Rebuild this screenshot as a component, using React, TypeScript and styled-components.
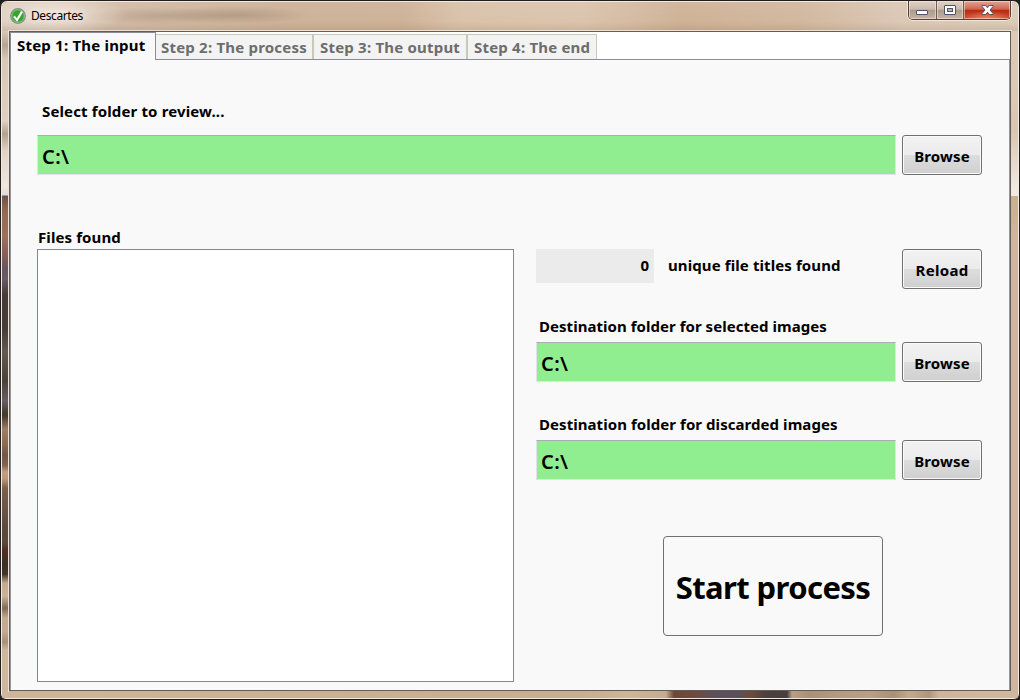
import React from 'react';
import styled, { createGlobalStyle, css } from 'styled-components';

const Global = createGlobalStyle`
  * { box-sizing: border-box; }
  html, body { margin: 0; padding: 0; background: #20201f; overflow: hidden; }
  button, input { font: inherit; color: inherit; margin: 0; }
`;

const Window = styled.div`
  width: 1020px;
  height: 700px;
  display: flex;
  flex-direction: column;
  border: 1px solid #201c1c;
  border-radius: 7px 7px 6px 6px;
  overflow: hidden;
  font-family: 'Noto Sans', 'Open Sans', sans-serif;
  color: #000;
  background: #cfb79f;
  box-shadow: inset 0 0 0 1px #f5eae0;
`;

const TitleBar = styled.header`
  height: 29px;
  flex: none;
  margin: 1px 1px 0;
  border-radius: 6px 6px 0 0;
  display: flex;
  align-items: flex-start;
  background:
    radial-gradient(ellipse 70px 22px at 55px 12px, rgba(255, 250, 245, 0.6), transparent),
    radial-gradient(ellipse 75px 9px at 155px 14px, rgba(145, 120, 100, 0.32), transparent),
    radial-gradient(ellipse 75px 9px at 232px 13px, rgba(135, 108, 88, 0.36), transparent),
    linear-gradient(180deg, rgba(255, 255, 255, 0.06), transparent 70%, rgba(90, 60, 35, 0.12)),
    linear-gradient(90deg, #dccdbf 0, #d3bda9 90px, #ccb298 280px, #cdb297 400px, #dac2aa 460px, #dbc4ad 580px, #ceb296 680px, #d2b89e 800px, #dbc8b6 900px, #dccbb9 100%);
`;

const AppIcon = styled.svg`
  width: 16px;
  height: 16px;
  margin: 6px 0 0 8px;
`;

const Title = styled.h1`
  margin: 6px 0 0 5px;
  font-size: 12px;
  line-height: 16px;
  font-weight: 400;
  letter-spacing: -0.4px;
  text-shadow: 0 0 8px #fff;
`;

const Controls = styled.div`
  display: flex;
  margin: -1px 7px 0 auto;
  width: 103px;
  height: 19px;
  border: 1px solid #54413b;
  border-top: 0;
  border-radius: 0 0 5px 5px;
  overflow: hidden;
  box-shadow: 0 0 0 1px rgba(255, 245, 235, 0.65);
`;

const Control = styled.button<{ $w: number; $divided?: boolean; $close?: boolean }>`
  width: ${(p) => p.$w}px;
  flex: none;
  height: 100%;
  padding: 0;
  border: 0;
  display: flex;
  justify-content: center;
  align-items: flex-start;
  border-left: ${(p) => (p.$divided ? 1 : 0)}px solid #6d5c55;
  background: ${(p) =>
    p.$close
      ? 'radial-gradient(ellipse 26px 8px at 50% 100%, #ec8568, transparent), linear-gradient(#e3a494, #cf6551 46%, #b82c13 50%, #cb4a2d)'
      : 'linear-gradient(#ded2c8, #cbbaac 46%, #ac9a8c 50%, #c5b3a3)'};
  box-shadow: inset 0 0 0 1px rgba(255, 240, 230, 0.5);
`;

const Body = styled.div`
  flex: 1;
  min-height: 0;
  display: flex;
  padding: 0 1px 1px;
`;

const Side = styled.div<{ $right?: boolean }>`
  width: 7px;
  flex: none;
  background: ${(p) =>
    p.$right
      ? 'linear-gradient(#dccab8 0, #dccab8 50px, #d9c5b1 100px, #efe8e1 155px, #f1ebe5 165px, #c9b092 165px, #cfb79f 215px, #cfb79f)'
      : `linear-gradient(#d9c8b9 0, #b5a595 14px, #d8c8b8 28px, #ded0c2 90px, #b2a18e 103px, #e2d3c6 120px,
        #eee6df 155px, #dfdcda 164px, #6b5151 165px, #916951 178px, #9d715b 205px, #865e5b 225px, #665663 237px,
        #6a5b67 248px, #46393a 264px, #443c39 298px, #615b54 321px, #48423b 350px, #685d69 370px, #443c30 382px,
        #493b30 385px, #9d7e63 398px, #8d6b52 413px, #705947 424px, #806350 434px, #c29d80 441px, #bd9776 448px,
        #7c604d 457px, #59493e 500px, #59493e 512px, #512e22 519px, #3b3027 532px, #3f332a 543px, #c5aa8b 552px,
        #ceb497 565px, #816c59 577px, #c4ab91 587px, #c4ab91 600px, #a99079 611px, #cfb79b 619px, #cfb79f)`};
`;

const Center = styled.div`
  flex: 1;
  min-width: 0;
  display: flex;
  flex-direction: column;
`;

const BottomGlass = styled.div`
  flex: 1;
  background: linear-gradient(90deg, #cdb59a 0, #c7ae93 570px, #cdb599 620px, #c3ac92 657px, #6c4637 665px, #704a3d 685px,
    #5b5259 703px, #59515a 730px, #6b4b39 742px, #4b423f 755px, #443e40 778px, #b79f87 783px, #a99177 800px,
    #b39b82 830px, #b89f85 860px, #a89077 885px, #c2aa8f 900px, #ae967c 920px, #cfb59b 930px, #d0b79e);
`;

const Client = styled.main`
  height: 660px;
  flex: none;
  display: flex;
  flex-direction: column;
  background: #f9f9f9;
  border: 1px solid #665c56;
  outline: 1px solid #eee2d7;
  box-shadow: inset 1px 0 #95979c, inset -1px 0 #95979c;
`;

const Tabs = styled.nav`
  height: 28px;
  flex: none;
  display: flex;
  align-items: flex-end;
  background: #fff;
  border-bottom: 1px solid #8b8d96;
`;

const bold = css`
  font-size: 15px;
  font-weight: 700;
  line-height: 20px;
  white-space: nowrap;
`;

const Tab = styled.div<{ $w: number; $active?: boolean; $divided?: boolean }>`
  ${bold}
  width: ${(p) => p.$w}px;
  letter-spacing: 0.2px;
  flex: none;
  ${(p) =>
    p.$active
      ? css`
          height: 28px;
          margin-bottom: -1px;
          padding: 2px 0 0 6px;
          background: #f9f9f9;
          border: 1px solid #8b8d96;
          border-bottom: 0;
        `
      : css`
          height: 25px;
          padding: 2px 0 0 ${p.$divided ? 6 : 5}px;
          color: #6d6d6d;
          background: #f3f3f3;
          border: 0 solid #c9c9b8;
          border-width: 1px 1px 0 ${p.$divided ? 1 : 0}px;
        `}
`;

const Page = styled.section`
  flex: 1;
  min-height: 0;
  display: flex;
  flex-direction: column;
  padding: 41px 28px 8px 27px;
`;

const Label = styled.label<{ $ls?: number; $pad?: number }>`
  ${bold}
  display: block;
  letter-spacing: ${(p) => p.$ls ?? 0}px;
  padding-left: ${(p) => p.$pad ?? 0}px;
`;

const Row = styled.div<{ $top?: number }>`
  display: flex;
  align-items: flex-start;
  gap: 6px;
  margin-top: ${(p) => p.$top ?? 0}px;
`;

const PathField = styled.input`
  flex: 1;
  min-width: 0;
  height: 40px;
  padding: 2px 4px 0;
  border: 1px solid #e2e3ea;
  border-top-color: #abadb3;
  border-radius: 0;
  background: #90ee90;
  && {
    font-size: 20px;
    font-weight: 600;
    letter-spacing: 0.4px;
  }
`;

const Button = styled.button<{ $ls?: number }>`
  && {
    ${bold}
  }
  width: 80px;
  height: 40px;
  flex: none;
  padding: 1px 0 0;
  letter-spacing: ${(p) => p.$ls ?? 0.15}px;
  border: 1px solid #707070;
  border-radius: 3px;
  background: linear-gradient(#f2f2f2, #ebebeb 50%, #dddddd 50%, #cfcfcf);
  box-shadow: inset 0 0 0 1px #fafafa;
`;

const Columns = styled.div`
  flex: 1;
  min-height: 0;
  display: flex;
  margin-top: 52px;
`;

const FilesColumn = styled.div`
  width: 477px;
  flex: none;
  display: flex;
  flex-direction: column;
`;

const FileList = styled.div`
  flex: 1;
  margin-top: 2px;
  background: #fff;
  border: 1px solid #828790;
`;

const Settings = styled.div`
  flex: 1;
  min-width: 0;
  display: flex;
  flex-direction: column;
  padding: 22px 0 0 22px;
`;

const Count = styled.output`
  ${bold}
  width: 118px;
  height: 34px;
  padding: 6px 5px 0 0;
  text-align: right;
  background: #ebebeb;
`;

const CountLabel = styled.span`
  ${bold}
  flex: 1;
  padding: 6px 0 0 8px;
  letter-spacing: 0.1px;
`;

const StartButton = styled.button`
  width: 220px;
  height: 100px;
  margin: 56px 0 0 127px;
  padding: 2px 0 0;
  border: 1px solid #707070;
  border-radius: 4px;
  background: #f9f9f9;
  white-space: nowrap;
  && {
    font-size: 31px;
    font-weight: 700;
    line-height: 42px;
    letter-spacing: -0.6px;
  }
`;

export default function App() {
  return (
    <>
      <Global />
      <Window>
        <TitleBar>
          <AppIcon viewBox="0 0 16 16">
            <circle cx="8" cy="8" r="7.3" fill="#36a52e" stroke="#858b88" strokeWidth="1.2" />
            <circle cx="8" cy="8" r="6.3" fill="none" stroke="#c9ddc5" strokeWidth=".6" />
            <path d="M4 8.4 7 12 12 3.6" fill="none" stroke="#fff" strokeWidth="2.1" />
          </AppIcon>
          <Title>Descartes</Title>
          <Controls>
            <Control $w={27} aria-label="Minimize">
              <svg width="13" height="17" viewBox="0 0 13 17">
                <rect x=".5" y="9.5" width="11" height="4" rx=".5" fill="#fff" stroke="#50536a" />
              </svg>
            </Control>
            <Control $w={27} $divided aria-label="Maximize">
              <svg width="13" height="17" viewBox="0 0 13 17">
                <rect x=".5" y="4.500" width="11" height="9" rx=".5" fill="#fff" stroke="#50536a" />
                <rect x="3.5" y="7.5" width="5" height="3" fill="#c0b0a3" stroke="#50536a" />
              </svg>
            </Control>
            <Control $w={47} $divided $close aria-label="Close">
              <svg width="13" height="17" viewBox="0 0 13 17">
                <path
                  d="M1 4.5h3.700L6.500 6.700 8.300 4.500H12v1L9 9l3 3.500v1H8.300L6.500 11.300 4.700 13.500H1v-1L4 9 1 5.500z"
                  fill="#fff"
                  stroke="#50536a"
                />
              </svg>
            </Control>
          </Controls>
        </TitleBar>
        <Body>
          <Side />
          <Center>
            <Client>
              <Tabs>
                <Tab $w={146} $active>Step 1: The input</Tab>
                <Tab $w={157}>Step 2: The process</Tab>
                <Tab $w={154} $divided>Step 3: The output</Tab>
                <Tab $w={130} $divided>Step 4: The end</Tab>
              </Tabs>
              <Page>
                <Label $pad={5} $ls={0.14}>Select folder to review...</Label>
                <Row $top={14}>
                  <PathField defaultValue="C:\" />
                  <Button>Browse</Button>
                </Row>
                <Columns>
                  <FilesColumn>
                    <Label $pad={1} $ls={0.1}>Files found</Label>
                    <FileList />
                  </FilesColumn>
                  <Settings>
                    <Row>
                      <Count>0</Count>
                      <CountLabel>unique file titles found</CountLabel>
                      <Button $ls={0.3}>Reload</Button>
                    </Row>
                    <Row $top={27}>
                      <Label $pad={3} $ls={0.04}>Destination folder for selected images</Label>
                    </Row>
                    <Row $top={6}>
                      <PathField defaultValue="C:\" />
                      <Button>Browse</Button>
                    </Row>
                    <Row $top={32}>
                      <Label $pad={3} $ls={0.06}>Destination folder for discarded images</Label>
                    </Row>
                    <Row $top={6}>
                      <PathField defaultValue="C:\" />
                      <Button>Browse</Button>
                    </Row>
                    <StartButton>Start process</StartButton>
                  </Settings>
                </Columns>
              </Page>
            </Client>
            <BottomGlass />
          </Center>
          <Side $right />
        </Body>
      </Window>
    </>
  );
}
